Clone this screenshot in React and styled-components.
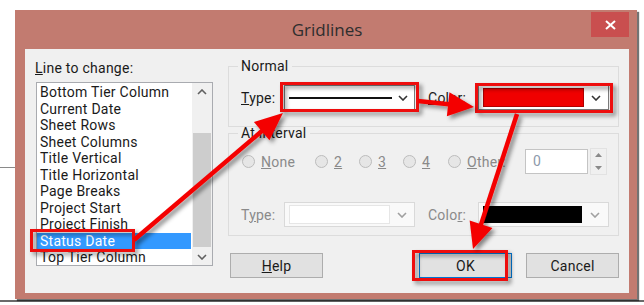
import React from "react";
import styled, { createGlobalStyle } from "styled-components";

const Global = createGlobalStyle`
  html, body { margin: 0; padding: 0; background: #fff; }
  body { font-family: Roboto, "Open Sans", sans-serif; }
  * { box-sizing: border-box; }
`;

const Page = styled.div`
  position: relative;
  width: 644px;
  height: 305px;
  overflow: hidden;
  background: #fff;
  padding: 10px 0 0 15px;
  &::before {
    content: "";
    position: absolute;
    left: 0;
    top: 167px;
    width: 15px;
    height: 1px;
    background: #8a8a8a;
  }
  &::after {
    content: "";
    position: absolute;
    left: 0;
    top: 300px;
    width: 644px;
    height: 2px;
    background: #6a6a6a;
  }
`;

const Dialog = styled.div`
  position: relative;
  z-index: 1;
  width: 622px;
  height: 289px;
  background: #c27b70;
  box-shadow: 2px 2px 1px rgba(0, 0, 0, 0.55);
  display: flex;
  flex-direction: column;
  padding: 0 8px 6px 10px;
`;

const TitleBar = styled.div`
  height: 39px;
  display: grid;
  grid-template-columns: 1fr auto 1fr;
  align-items: center;
`;

const Title = styled.div`
  grid-column: 2;
  font-family: "Open Sans", sans-serif;
  font-size: 17px;
  color: #2e2e2e;
  line-height: 20px;
  margin-top: 1px;
`;

const CloseButton = styled.div`
  grid-column: 3;
  justify-self: end;
  align-self: start;
  margin-top: 2px;
  width: 38px;
  height: 25px;
  background: #c94f4f;
  display: flex;
  align-items: center;
  justify-content: center;
`;

const Content = styled.div`
  flex: 1;
  background: #f0f0f0;
  display: grid;
  grid-template-columns: 178px 391px;
  column-gap: 15px;
  padding-left: 10px;
  color: #1a1a1a;
  font-size: 14px;
  letter-spacing: 0.25px;
`;

const LeftCol = styled.div`
  padding-top: 11px;
  display: flex;
  flex-direction: column;
`;

const Label = styled.div`
  line-height: 16px;
  white-space: nowrap;
  color: ${(p) => (p.$disabled ? "#8a8a8a" : "#1a1a1a")};
`;

const ListBox = styled.div`
  margin-top: 6px;
  margin-left: 1px;
  width: 177px;
  height: 184px;
  border: 1px solid #a9abb0;
  background: #fff;
  display: flex;
  overflow: hidden;
`;

const Items = styled.div`
  width: 154px;
  padding-top: 1px;
  margin-right: 1px;
`;

const Item = styled.div`
  height: 16.5px;
  line-height: 16.5px;
  padding-left: 3px;
  white-space: nowrap;
  background: ${(p) => (p.$selected ? "#3399ff" : "transparent")};
  color: ${(p) => (p.$selected ? "#fff" : "#1a1a1a")};
`;

const ScrollBar = styled.div`
  width: 20px;
  background: #f0f0f0;
  display: flex;
  flex-direction: column;
`;

const ScrollArrow = styled.div`
  height: 17px;
  display: flex;
  align-items: center;
  justify-content: center;
`;

const Track = styled.div`
  flex: 1;
  padding: 33px 1px 0 1px;
`;

const Thumb = styled.div`
  height: 114px;
  background: #cdcdcd;
`;

const RightCol = styled.div`
  padding-top: 10px;
  display: flex;
  flex-direction: column;
`;

const Group = styled.fieldset`
  margin: ${(p) => (p.$overlap ? "-1px 0 0 0" : "0")};
  min-width: 0;
  border: 1px solid #dcdcdc;
  padding: 0 10px ${(p) => p.$pb}px 12px;
`;

const Legend = styled.legend`
  font-size: 14px;
  line-height: 14px;
  padding: 0 3px;
  margin-left: -3px;
  color: #1a1a1a;
`;

const FieldRow = styled.div`
  display: grid;
  grid-template-columns: 43px 144px 50px 131px;
  align-items: center;
  margin-top: ${(p) => p.$mt}px;
`;

const Combo = styled.div`
  width: 131px;
  height: 25px;
  border: 1px solid ${(p) => (p.$disabled ? "#d9d9d9" : "#7a7a7a")};
  background: ${(p) => (p.$disabled ? "#f9f9f9" : "#fff")};
  display: flex;
  align-items: center;
  padding-left: 4px;
`;

const LineSample = styled.div`
  width: 103px;
  height: 2px;
  background: #111;
`;

const Swatch = styled.div`
  width: ${(p) => p.$w}px;
  height: ${(p) => p.$h}px;
  background: ${(p) => p.$color};
  border: 1px solid ${(p) => p.$border};
`;

const ChevronBox = styled.div`
  flex: 1;
  display: flex;
  align-items: center;
  justify-content: center;
`;

const RadioRow = styled.div`
  display: grid;
  grid-template-columns: 73px 44px 44px 45px 77px auto;
  align-items: center;
  height: 27px;
  margin-top: 8px;
  padding-left: 1px;
`;

const RadioItem = styled.div`
  display: flex;
  align-items: center;
  gap: 6px;
  color: #8a8a8a;
  line-height: 16px;
`;

const Circle = styled.div`
  width: 13px;
  height: 13px;
  border-radius: 50%;
  border: 1px solid #bcbcbc;
  background: #e6e6e6;
`;

const Spin = styled.div`
  display: flex;
  align-items: center;
  gap: 2px;
`;

const TextBox = styled.div`
  width: 63px;
  height: 25px;
  border: 1px solid #c4c4c4;
  background: #fff;
  padding-left: 7px;
  line-height: 23px;
  color: #8d9aab;
`;

const Spinner = styled.div`
  width: 17px;
  height: 27px;
  border: 1px solid #e2e2e2;
  display: flex;
  flex-direction: column;
`;

const SpinHalf = styled.div`
  flex: 1;
  display: flex;
  align-items: center;
  justify-content: center;
`;

const ButtonRow = styled.div`
  display: flex;
  margin-top: 17px;
  padding-left: 2px;
`;

const Button = styled.div`
  width: 93px;
  height: 25px;
  background: #e1e1e1;
  border: 1px solid ${(p) => (p.$focused ? "#0078d7" : "#adadad")};
  display: flex;
  align-items: center;
  justify-content: center;
  color: #1a1a1a;
  margin-left: ${(p) => p.$ml || 0};
`;

const Overlay = styled.svg`
  position: absolute;
  left: 0;
  top: 0;
  width: 644px;
  height: 305px;
  pointer-events: none;
  z-index: 2;
`;

const Chevron = ({ dir = "down", color = "#333" }) => (
  <svg width="10" height="6" viewBox="0 0 10 6">
    <polyline
      points={dir === "down" ? "1,1 5,5 9,1" : "1,5 5,1 9,5"}
      fill="none"
      stroke={color}
      strokeWidth="1.6"
    />
  </svg>
);

const Tri = ({ up }) => (
  <svg width="7" height="4" viewBox="0 0 7 4">
    <polygon points={up ? "0,4 3.5,0 7,4" : "0,0 3.5,4 7,0"} fill="#8a8a8a" />
  </svg>
);

function Arrow({ x1, y1, x2, y2, len = 27, half = 12 }) {
  const dx = x2 - x1;
  const dy = y2 - y1;
  const L = Math.hypot(dx, dy);
  const ux = dx / L;
  const uy = dy / L;
  const bx = x2 - ux * len;
  const by = y2 - uy * len;
  const px = -uy;
  const py = ux;
  const pts = `${x2},${y2} ${bx + px * half},${by + py * half} ${bx - px * half},${by - py * half}`;
  return (
    <g>
      <line x1={x1} y1={y1} x2={bx + ux * 3} y2={by + uy * 3} stroke="#f40000" strokeWidth="4.5" />
      <polygon points={pts} fill="#f40000" />
    </g>
  );
}

const items = [
  "Bottom Tier Column",
  "Current Date",
  "Sheet Rows",
  "Sheet Columns",
  "Title Vertical",
  "Title Horizontal",
  "Page Breaks",
  "Project Start",
  "Project Finish",
  "Status Date",
  "Top Tier Column",
];

export default function App() {
  return (
    <>
      <Global />
      <Page>
        <Dialog>
          <TitleBar>
            <Title>Gridlines</Title>
            <CloseButton>
              <svg width="11" height="10" viewBox="0 0 11 10">
                <line x1="1" y1="1" x2="10" y2="9" stroke="#fff" strokeWidth="2" />
                <line x1="10" y1="1" x2="1" y2="9" stroke="#fff" strokeWidth="2" />
              </svg>
            </CloseButton>
          </TitleBar>
          <Content>
            <LeftCol>
              <Label>
                <u>L</u>ine to change:
              </Label>
              <ListBox>
                <Items>
                  {items.map((t) => (
                    <Item key={t} $selected={t === "Status Date"}>
                      {t}
                    </Item>
                  ))}
                </Items>
                <ScrollBar>
                  <ScrollArrow>
                    <Chevron dir="up" color="#606060" />
                  </ScrollArrow>
                  <Track>
                    <Thumb />
                  </Track>
                  <ScrollArrow>
                    <Chevron dir="down" color="#606060" />
                  </ScrollArrow>
                </ScrollBar>
              </ListBox>
            </LeftCol>
            <RightCol>
              <Group $pb={16}>
                <Legend>Normal</Legend>
                <FieldRow $mt={12}>
                  <Label>
                    <u>T</u>ype:
                  </Label>
                  <Combo>
                    <LineSample />
                    <ChevronBox>
                      <Chevron />
                    </ChevronBox>
                  </Combo>
                  <Label>
                    <u>C</u>olor:
                  </Label>
                  <Combo>
                    <Swatch $w={101} $h={19} $color="#f00000" $border="#b00000" />
                    <ChevronBox>
                      <Chevron />
                    </ChevronBox>
                  </Combo>
                </FieldRow>
              </Group>
              <Group $pb={8} $overlap>
                <Legend>At interval</Legend>
                <RadioRow>
                  <RadioItem>
                    <Circle />
                    <span>
                      <u>N</u>one
                    </span>
                  </RadioItem>
                  <RadioItem>
                    <Circle />
                    <u>2</u>
                  </RadioItem>
                  <RadioItem>
                    <Circle />
                    <u>3</u>
                  </RadioItem>
                  <RadioItem>
                    <Circle />
                    <u>4</u>
                  </RadioItem>
                  <RadioItem>
                    <Circle />
                    <span>
                      <u>O</u>ther:
                    </span>
                  </RadioItem>
                  <Spin>
                    <TextBox>0</TextBox>
                    <Spinner>
                      <SpinHalf>
                        <Tri up />
                      </SpinHalf>
                      <SpinHalf>
                        <Tri />
                      </SpinHalf>
                    </Spinner>
                  </Spin>
                </RadioRow>
                <FieldRow $mt={27}>
                  <Label $disabled>
                    T<u>y</u>pe:
                  </Label>
                  <Combo $disabled>
                    <Swatch $w={101} $h={19} $color="#fff" $border="#e6e6e6" />
                    <ChevronBox>
                      <Chevron color="#a0a0a0" />
                    </ChevronBox>
                  </Combo>
                  <Label $disabled>
                    Colo<u>r</u>:
                  </Label>
                  <Combo $disabled>
                    <Swatch $w={99} $h={17} $color="#000" $border="#000" />
                    <ChevronBox>
                      <Chevron color="#a0a0a0" />
                    </ChevronBox>
                  </Combo>
                </FieldRow>
              </Group>
              <ButtonRow>
                <Button>
                  <span>
                    <u>H</u>elp
                  </span>
                </Button>
                <Button $focused $ml="auto">
                  OK
                </Button>
                <Button $ml="14px">Cancel</Button>
              </ButtonRow>
            </RightCol>
          </Content>
        </Dialog>
        <Overlay viewBox="0 0 644 305">
          <defs>
            <filter id="sh" x="-20%" y="-20%" width="140%" height="140%">
              <feDropShadow dx="3" dy="3" stdDeviation="2" floodColor="#000" floodOpacity="0.45" />
            </filter>
          </defs>
          <g filter="url(#sh)" fill="none" stroke="#ee1111" strokeWidth="3">
            <rect x="31.5" y="230.5" width="102" height="20" />
            <rect x="281.5" y="83.5" width="136" height="27" />
            <rect x="476.5" y="84.5" width="135" height="27" />
            <rect x="413.5" y="251.5" width="93" height="28" />
          </g>
          <g filter="url(#sh)">
            <Arrow x1={134} y1={240} x2={283} y2={113} len={28} half={12} />
            <Arrow x1={418} y1={101} x2={474} y2={107} len={26} half={12} />
            <Arrow x1={517} y1={114} x2={473} y2={249} len={26} half={12} />
          </g>
        </Overlay>
      </Page>
    </>
  );
}
